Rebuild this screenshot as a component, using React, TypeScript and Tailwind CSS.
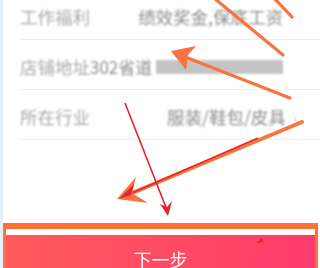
const rows = [
  { label: '工作福利', value: '绩效奖金,保底工资', arrow: false },
  { label: '店铺地址', value: '', arrow: false },
  { label: '所在行业', value: '服装/鞋包/皮具', arrow: true },
]

function Arrows() {
  return (
    <svg
      className="pointer-events-none absolute inset-0"
      width="320"
      height="268"
      viewBox="0 0 320 268"
    >
      {/* top right strokes */}
      <line x1="214" y1="-2" x2="283" y2="55" stroke="#f7733f" strokeWidth="3.2" strokeLinecap="round" />
      <line x1="274" y1="-2" x2="292" y2="17" stroke="#f7733f" strokeWidth="3.2" strokeLinecap="round" />
      {/* arrow pointing to address */}
      <line x1="290" y1="98" x2="180" y2="55" stroke="#f7733f" strokeWidth="3.2" strokeLinecap="round" />
      <path d="M171 51 L196 46 L188 55 L186 70 Z" fill="#f7733f" />
      {/* big arrow down-left */}
      <line x1="302" y1="122" x2="125" y2="196" stroke="#f5763f" strokeWidth="4" strokeLinecap="round" />
      <line x1="258" y1="138" x2="125" y2="196" stroke="#e8252b" strokeWidth="1.6" />
      <path d="M117 199 L136 177 L132 193 L148 203 Z" fill="#f5763f" />
      <path d="M119 199 L134 184 L131 195 Z" fill="#e8252b" />
      {/* thin red arrow */}
      <line x1="125" y1="103" x2="167" y2="210" stroke="#e8202a" strokeWidth="1.6" />
      <path d="M168 216 L160 204 L167 207 L172 201 Z" fill="#e8202a" />
      {/* small red head on button */}
      <path d="M262 238 L256 243 L263 242 L265 248 Z" fill="#e8202a" />
    </svg>
  )
}

export default function App() {
  return (
    <div
      className="relative h-[268px] w-[320px] overflow-hidden bg-white"
      style={{ fontFamily: '"Noto Sans CJK SC", "Noto Sans", sans-serif' }}
    >
      <div className="flex h-full">
        <div className="w-[3px] shrink-0 bg-[#e6f0fa]" />
        <div className="flex flex-1 flex-col">
          <div className="-mt-[10px] flex flex-col">
            {rows.map((row, i) => (
              <div
                key={i}
                className="ml-[17px] flex h-[50px] items-center border-b border-[#eeeeee] pt-[4px] pr-[37px]"
              >
                <span className="w-[70px] shrink-0 whitespace-nowrap text-[17.5px] leading-none text-[#a8a8a8] blur-[1px]">
                  {row.label}
                </span>
                {i === 1 ? (
                  <div className="flex flex-1 items-center">
                    <span className="whitespace-nowrap text-[17px] leading-none text-[#8e8e8e] blur-[1px]">
                      302省道
                    </span>
                    <div className="ml-[4px] h-[14px] flex-1 bg-[#c4c4c4] blur-[1.2px]" />
                  </div>
                ) : (
                  <span className="flex-1 whitespace-nowrap text-right text-[17.5px] leading-none text-[#8c8c8c] blur-[1px]">
                    {row.value}
                  </span>
                )}
                {row.arrow && (
                  <span className="-mr-[14px] ml-[7px] text-[14px] leading-none text-[#d0d0d0] blur-[0.6px]">
                    ›
                  </span>
                )}
              </div>
            ))}
          </div>
          <div className="flex-1" />
          <div className="mr-[2px] flex h-[45px] flex-col border-x-[3px] border-t-[6px] border-[#ff7236] bg-white">
            <div className="h-[8px] bg-white" />
            <div className="flex flex-1 justify-center bg-gradient-to-r from-[#ff5a5b] to-[#ff3a6b] pt-[15px]">
              <span className="text-[18px] leading-none text-white blur-[0.4px]">下一步</span>
            </div>
          </div>
        </div>
      </div>
      <Arrows />
    </div>
  )
}
